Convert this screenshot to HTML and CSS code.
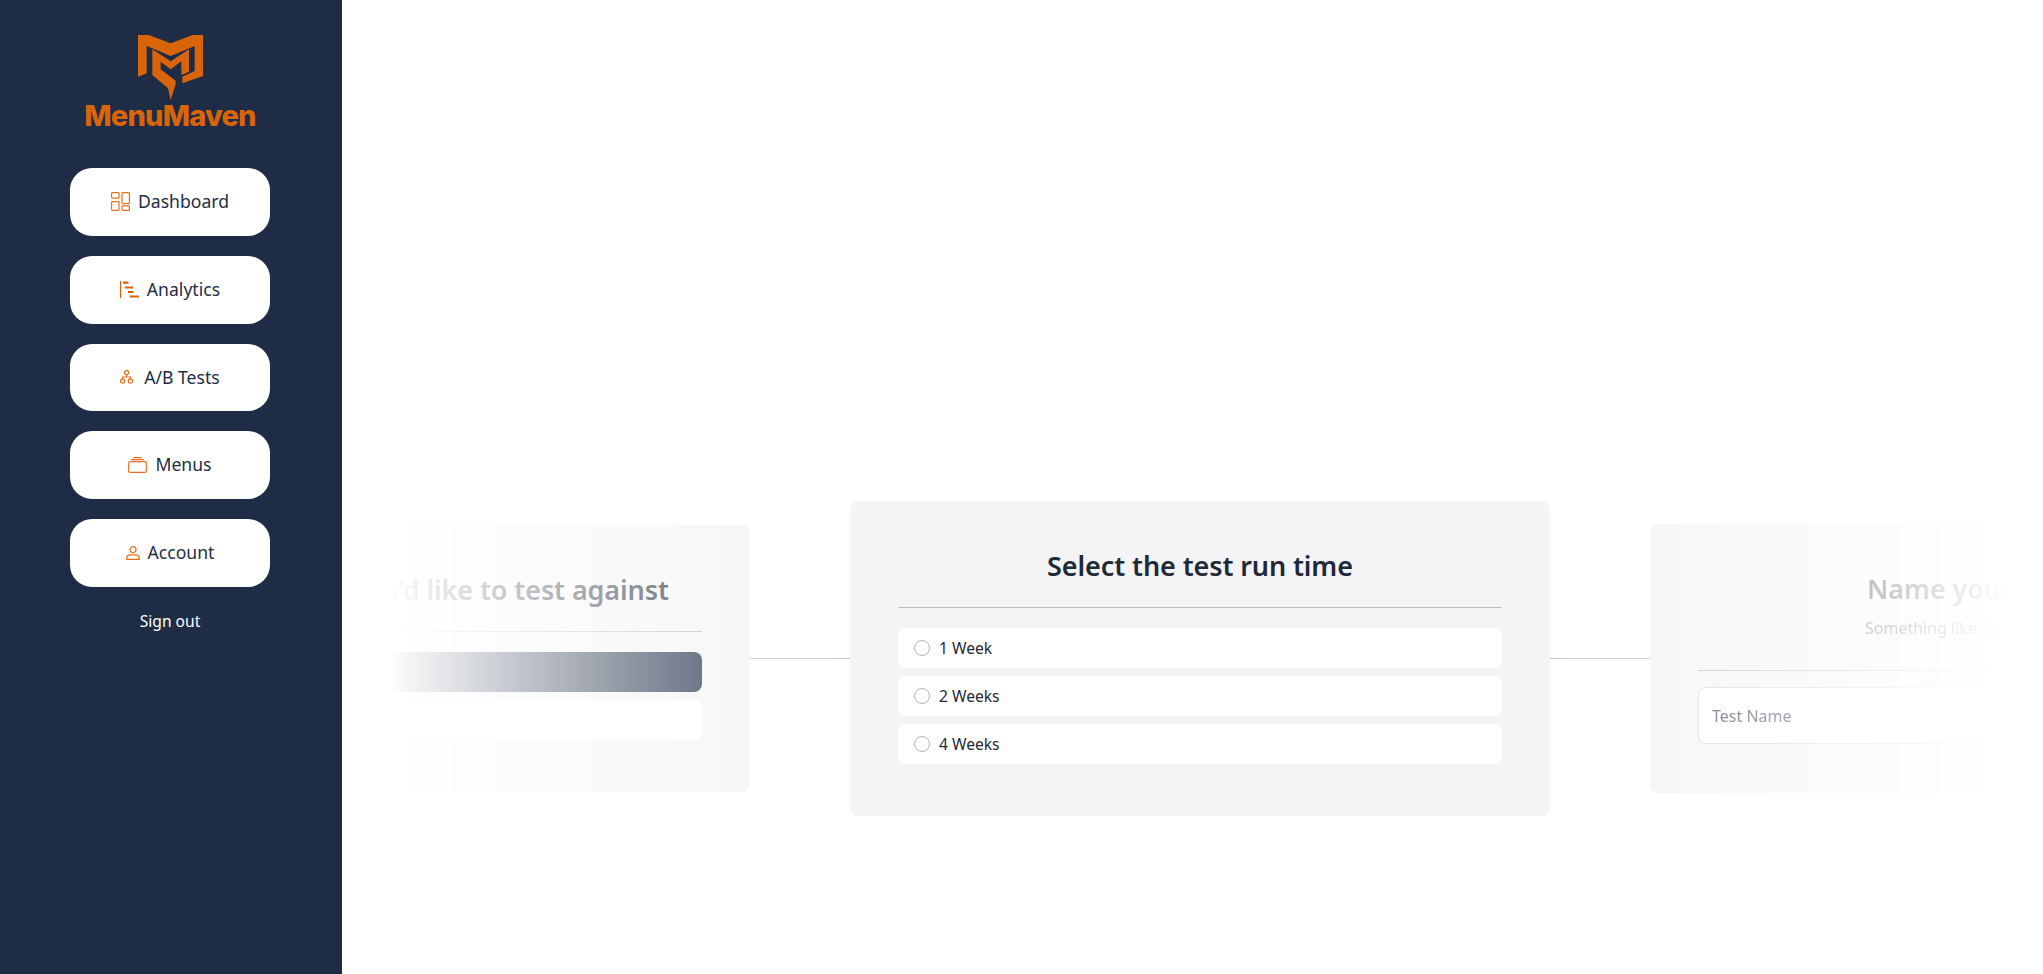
FILE: index.html
```html
<!DOCTYPE html>
<html lang="en">
<head>
<meta charset="utf-8">
<title>MenuMaven</title>
<link rel="stylesheet" href="styles.css">
</head>
<body>
<div class="app">
  <aside class="sidebar">
    <svg class="logo-mark" viewBox="232 45 195 195" aria-hidden="true">
      <path class="logo-fill" d="M232 45H264L330 70L396 45H427V168L365 190V170L402 153V78L330 108L258 78V160L232 170Z"/>
      <path class="logo-fill" d="M275 88L330 124L385 88V155L362 165V124L330 148L300 125V148L345 182V192L330 240L322 205L275 165Z"/>
    </svg>
    <div class="logo-text">MenuMaven</div>
    <nav class="nav">
      <a class="nav-btn">
        <svg class="icon ic-dash" viewBox="0 0 19 19"><rect x=".6" y=".6" width="7.4" height="5.6" rx=".8"/><rect x=".6" y="9.6" width="7.4" height="8.8" rx=".8"/><rect x="11" y=".6" width="7.4" height="11" rx=".8"/><rect x="11" y="13.8" width="7.4" height="4.6" rx=".8"/></svg>
        <span>Dashboard</span>
      </a>
      <a class="nav-btn">
        <svg class="icon ic-ana" viewBox="0 0 19 17"><path d="M.6 0V17" /><path class="thick" d="M3 1.7H8.5M4.8 6.5H13M8 11H13.5M9.5 15.5H19"/></svg>
        <span>Analytics</span>
      </a>
      <a class="nav-btn ab">
        <svg class="icon ic-ab" viewBox="0 0 13 14"><circle cx="6.5" cy="2.6" r="2.1"/><circle cx="2.6" cy="11" r="2.1"/><circle cx="10.4" cy="11" r="2.1"/><path d="M6.5 4.7V7M2.6 8.9V7H10.4V8.9"/></svg>
        <span>A/B Tests</span>
      </a>
      <a class="nav-btn">
        <svg class="icon ic-menu" viewBox="0 0 19 16"><rect x=".7" y="4.7" width="17.6" height="10.6" rx="1.4"/><path d="M3 2.7H16M5.5 .6H13.5"/></svg>
        <span>Menus</span>
      </a>
      <a class="nav-btn">
        <svg class="icon ic-acc" viewBox="0 0 14 14"><circle cx="7" cy="3.7" r="3"/><path d="M.7 13.3V12C.7 10 2.5 8.8 4.5 8.8H9.5C11.5 8.8 13.3 10 13.3 12V13.3Z"/></svg>
        <span>Account</span>
      </a>
    </nav>
    <a class="signout">Sign out</a>
  </aside>
  <main class="main">
    <div class="track">
      <section class="card">
        <h2 class="title">Select the menu you'd like to test against</h2>
        <div class="rule"></div>
        <div class="rows">
          <div class="row selected"></div>
          <div class="row"></div>
        </div>
      </section>
      <div class="link"></div>
      <section class="card">
        <h2 class="title">Select the test run time</h2>
        <div class="rule"></div>
        <div class="rows">
          <label class="row"><input class="radio" type="radio" name="t"><span>1 Week</span></label>
          <label class="row"><input class="radio" type="radio" name="t"><span>2 Weeks</span></label>
          <label class="row"><input class="radio" type="radio" name="t"><span>4 Weeks</span></label>
        </div>
      </section>
      <div class="link"></div>
      <section class="card card-name">
        <h2 class="title">Name your split test</h2>
        <p class="sub">Something like "Lunch Menu Test 1"</p>
        <div class="rule"></div>
        <input class="name-input" type="text" placeholder="Test Name">
      </section>
    </div>
  </main>
</div>
</body>
</html>
```
FILE: styles.css
```css
* { box-sizing: border-box; }
html, body { margin: 0; height: 100%; background: #fff; }
body { font-family: "Noto Sans", "Open Sans", sans-serif; color: #1e2d45; overflow: hidden; }
.app { display: flex; height: 974px; }

.sidebar {
  width: 342px; flex: none; background: #1e2d45;
  display: flex; flex-direction: column; align-items: center;
  padding: 35px 2px 0 0;
}
.logo-mark { width: 65px; height: 65px; display: block; }
.logo-fill { fill: #d9650a; }
.logo-text {
  font-family: "Inter", sans-serif; font-weight: 800; font-size: 29px; line-height: 28px;
  letter-spacing: -0.8px; color: #d9650a; margin-top: 2px;
}
.nav { display: flex; flex-direction: column; gap: 20px; margin-top: 38px; }
.nav-btn {
  width: 200px; height: 67.75px; background: #fff; border-radius: 22px;
  display: flex; align-items: center; justify-content: center; gap: 8px;
  font-size: 17.6px; color: #1e2d45;
}
.nav-btn span { padding-bottom: 2px; }
.nav-btn.ab { gap: 11px; }
.nav-btn.ab span { padding-bottom: 1px; }
.icon { display: block; fill: none; stroke: #ea6f1c; stroke-width: 1.2; flex: none; }
.ic-dash { width: 19px; height: 19px; }
.ic-ana { width: 19px; height: 17px; stroke: #d9620f; }
.ic-ana .thick { stroke-width: 2.2; }
.ic-ab { width: 13px; height: 14px; }
.ic-menu { width: 19px; height: 16px; }
.ic-acc { width: 14px; height: 14px; }
.signout { margin-top: 22px; color: #fff; font-size: 15.6px; line-height: 24px; }

.main { flex: 1; min-width: 0; padding: 501px 36px 0 51px; }
.track {
  display: flex; align-items: center; justify-content: center; overflow: hidden;
  height: 315px;
  -webkit-mask-image: linear-gradient(to right, rgba(0,0,0,.015), #000 30%, #000 70%, transparent 100%);
  mask-image: linear-gradient(to right, rgba(0,0,0,.015), #000 30%, #000 70%, transparent 100%);
}
.card {
  width: 700px; flex: none; background: #f4f4f6; border-radius: 8px;
  padding: 48px 48px 52px;
}
.card-name { padding-bottom: 49px; }
.title { margin: 0; padding-bottom: 2px; font-size: 27px; line-height: 34px; font-weight: 600; letter-spacing: -0.1px; text-align: center; color: #1f2937; white-space: nowrap; }
.sub { margin: 8px 0 0; font-size: 16px; line-height: 24px; text-align: center; color: #4b5563; white-space: nowrap; }
.rule { height: 1px; background: #bdbdc0; margin-top: 22px; }
.card-name .rule { margin-top: 30px; }
.rows { display: flex; flex-direction: column; gap: 8px; margin-top: 20px; }
.row {
  height: 40px; background: #fff; border-radius: 8px; padding: 0 16px;
  display: flex; align-items: center; gap: 9px; font-size: 15.6px; color: #1f2937;
}
.row.selected { background: #1e2d45; }
.radio {
  appearance: none; -webkit-appearance: none; margin: 0; flex: none;
  width: 16px; height: 16px; border-radius: 50%; border: 1px solid #b5b5b8; background: #fff;
}
.link { width: 100px; height: 1px; flex: none; background: #c4c4c8; }
.name-input {
  display: block; width: 100%; height: 57px; margin-top: 16px; padding: 0 13px;
  border: 1px solid #d1d5db; border-radius: 8px; background: #fff;
  font: 16px "Noto Sans", sans-serif; color: #1f2937;
}
.name-input::placeholder { color: #374151; opacity: 1; }
```
